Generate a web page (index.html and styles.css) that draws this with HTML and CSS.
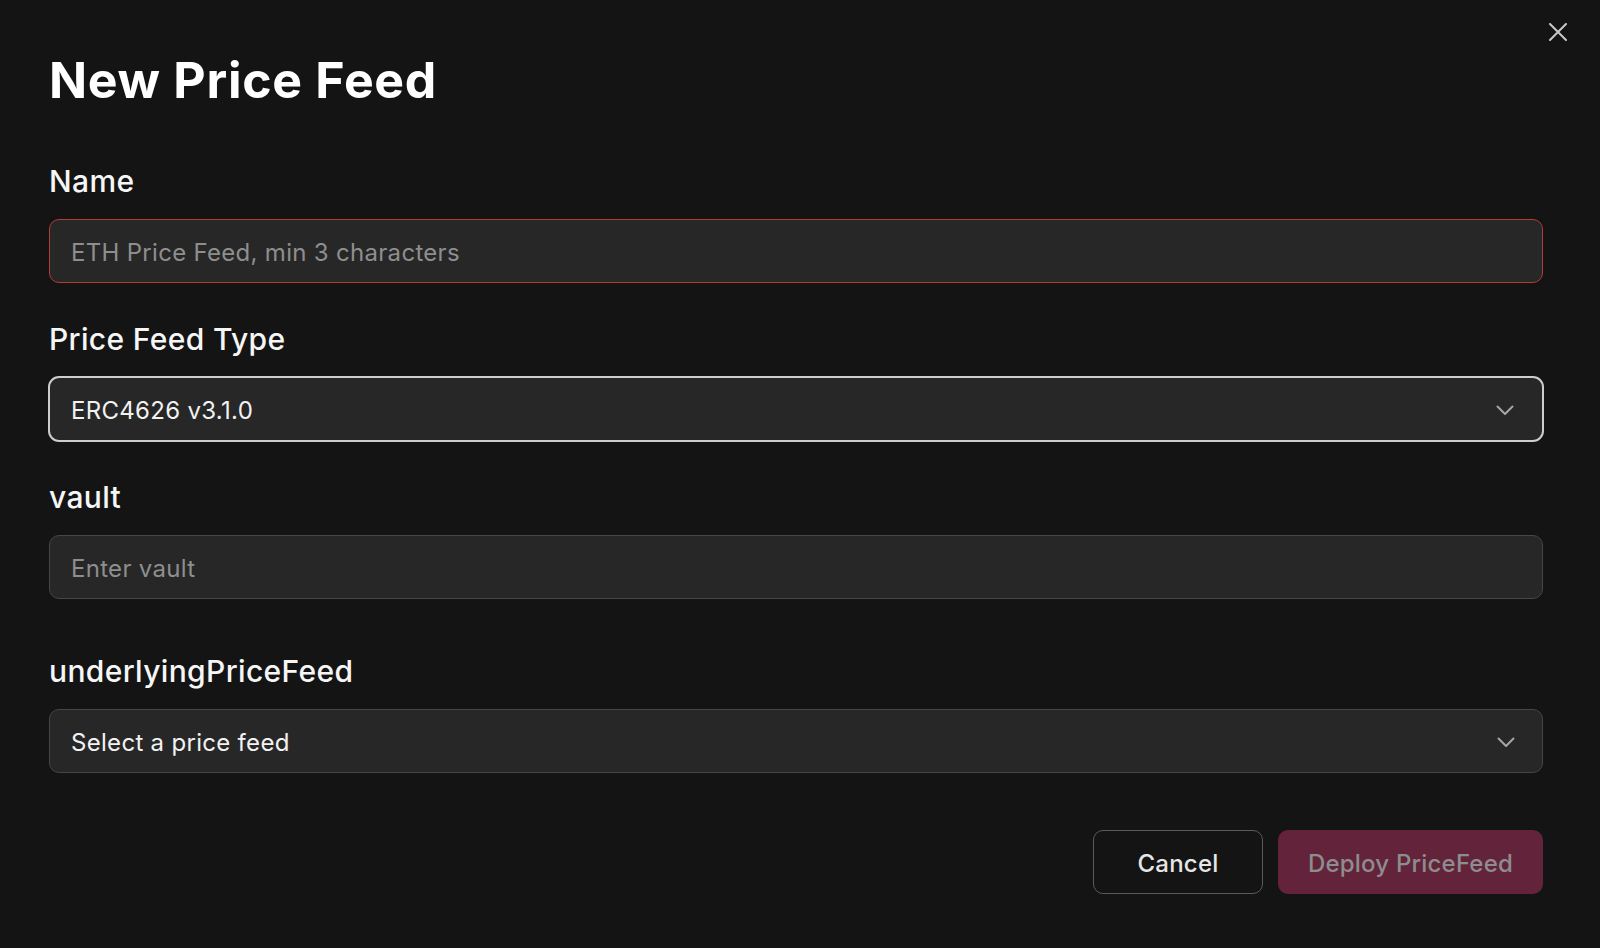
FILE: index.html
```html
<!DOCTYPE html>
<html lang="en">
<head>
<meta charset="utf-8">
<title>New Price Feed</title>
<link rel="stylesheet" href="styles.css">
</head>
<body>
<div class="modal">
  <button class="close" aria-label="Close">
    <svg width="18" height="18" viewBox="0 0 18 18"><path d="M1 1L17 17M17 1L1 17" stroke="currentColor" stroke-width="2" stroke-linecap="round" fill="none"/></svg>
  </button>
  <h1 class="title">New Price Feed</h1>
  <form class="form">
    <div class="field">
      <label class="label">Name</label>
      <div class="control control-error"><span class="placeholder">ETH Price Feed, min 3 characters</span></div>
    </div>
    <div class="field">
      <label class="label">Price Feed Type</label>
      <div class="control control-select control-focus">
        <span class="value">ERC4626 v3.1.0</span>
        <svg class="chevron" width="18" height="11" viewBox="0 0 18 11"><path d="M1.5 1.5L9 9L16.5 1.5" stroke="currentColor" stroke-width="2" stroke-linecap="round" stroke-linejoin="round" fill="none"/></svg>
      </div>
    </div>
    <div class="field field-spaced">
      <label class="label">vault</label>
      <div class="control"><span class="placeholder">Enter vault</span></div>
    </div>
    <div class="field">
      <label class="label">underlyingPriceFeed</label>
      <div class="control control-select">
        <span class="value">Select a price feed</span>
        <svg class="chevron" width="18" height="11" viewBox="0 0 18 11"><path d="M1.5 1.5L9 9L16.5 1.5" stroke="currentColor" stroke-width="2" stroke-linecap="round" stroke-linejoin="round" fill="none"/></svg>
      </div>
    </div>
    <div class="actions">
      <button type="button" class="btn btn-cancel">Cancel</button>
      <button type="button" class="btn btn-deploy">Deploy PriceFeed</button>
    </div>
  </form>
</div>
</body>
</html>
```
FILE: styles.css
```css
html, body {
  margin: 0;
  padding: 0;
  background: #141414;
  height: 100%;
}
body {
  font-family: Inter, "Noto Sans", "Liberation Sans", sans-serif;
  color: #f4f4f4;
}
.modal {
  position: relative;
  padding: 50px 57px 0 49px;
}
.close {
  position: absolute;
  top: 23px;
  right: 33px;
  width: 18px;
  height: 18px;
  padding: 0;
  border: 0;
  background: none;
  color: #c9c9c9;
  display: flex;
}
.title {
  margin: 0;
  font-size: 50px;
  line-height: 60px;
  font-weight: 700;
  color: #ffffff;
  letter-spacing: 0.7px;
}
.form {
  margin-top: 53px;
  display: flex;
  flex-direction: column;
  gap: 38px;
}
.field {
  display: flex;
  flex-direction: column;
  gap: 20px;
}
.field-spaced {
  margin-bottom: 16px;
}
.label {
  font-size: 30px;
  line-height: 36px;
  font-weight: 500;
  color: #f6f6f6;
  letter-spacing: 0.35px;
}
.control {
  box-sizing: border-box;
  height: 64px;
  border: 1px solid #464646;
  border-radius: 10px;
  background: #272727;
  display: flex;
  align-items: center;
  padding: 2px 27px 0 21px;
  font-size: 24px;
  letter-spacing: 0.3px;
}
.control-error {
  border-color: #b53a3a;
}
.control-focus {
  height: 66px;
  margin: -1px;
  border: 2px solid #cdcdcd;
  border-radius: 11px;
  padding-right: 28px;
}
.control-select {
  justify-content: space-between;
}
.placeholder {
  color: #8e8e8e;
}
.value {
  color: #f2f2f2;
}
.chevron {
  color: #a6a6a6;
}
.actions {
  margin-top: 19px;
  display: flex;
  justify-content: flex-end;
  gap: 15px;
}
.btn {
  box-sizing: border-box;
  height: 64px;
  border-radius: 10px;
  font-family: inherit;
  font-size: 24px;
  font-weight: 500;
  letter-spacing: 0.2px;
  padding: 2px 0 0;
}
.btn-cancel {
  width: 170px;
  background: transparent;
  border: 1px solid #5a5a5e;
  color: #e6e6e6;
}
.btn-deploy {
  width: 265px;
  background: #62233b;
  border: 0;
  color: #8d8d8d;
}
```
